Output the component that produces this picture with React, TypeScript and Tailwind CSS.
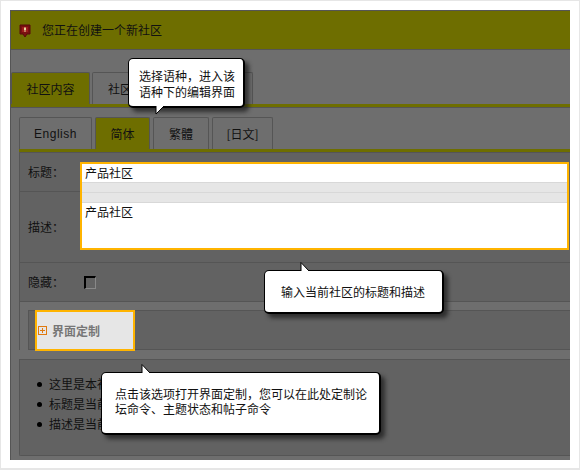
import React from "react"

const font = "font-['Noto_Sans_CJK_SC','Liberation_Sans',sans-serif]"

function Tab({ label, active, className }: { label: string; active?: boolean; className: string }) {
  return (
    <div
      className={
        "flex h-[32px] items-center justify-center rounded-t-[2px] border border-b-0 border-[#555] text-[12px] text-[#111] " +
        (active ? "bg-[#6e6e00] " : "bg-[#6e6e6e] ") +
        className
      }
    >
      {label}
    </div>
  )
}

// white speech bubble laid over the dimmed page
function Callout({ className, tailClass, up, children }: { className: string; tailClass: string; up?: boolean; children: React.ReactNode }) {
  return (
    <div className={"absolute z-10 rounded-[5px] border border-black border-b-2 border-r-2 bg-white text-[12px] text-[#111] shadow-[4px_4px_4px_rgba(30,30,30,0.75)] " + className}>
      {children}
      <svg className={"absolute " + tailClass} width="12" height="9" viewBox="0 0 12 9">
        {up ? (
          <path d="M1 9V0.5L9 9" fill="#fff" stroke="#000" strokeWidth="1" />
        ) : (
          <path d="M1 0L1 8L9 0" fill="#fff" stroke="#000" strokeWidth="1" />
        )}
      </svg>
    </div>
  )
}

export default function App() {
  return (
    <div className={"relative h-[470px] w-[580px] overflow-hidden border-t border-l border-r border-b-2 border-[#e6e6e6] bg-white " + font}>
      <div className="ml-[9px] mt-[9px] h-[450px] w-[560px] overflow-hidden border-l border-t border-[#555] bg-[#6e6e6e]">
        <div className="flex h-[39px] items-center border-b border-[#555] bg-[#6e6e00] pl-[8px] text-[12px] text-[#111]">
          <svg width="12" height="14" viewBox="0 0 12 14" className="mr-[11px] mt-[1px]">
            <path d="M1 1H11V10H8L6 13L4 10H1Z" fill="#7a1010" stroke="#5a0a0a" />
            <rect x="3" y="3" width="6" height="5" fill="#9c1c1c" />
            <rect x="5" y="3.5" width="2" height="2.5" fill="#e8d8a0" />
            <rect x="5" y="6.5" width="2" height="1" fill="#e8d8a0" />
          </svg>
          您正在创建一个新社区
        </div>

        <div className="mt-[22px] flex gap-[2px]">
          <Tab label="社区内容" active className="w-[79px]" />
          <div className="flex h-[32px] w-[161px] items-center rounded-t-[2px] border border-b-0 border-[#555] pl-[15px] text-[12px] text-[#111]">社区</div>
        </div>
        <div className="h-[3px] bg-[#6e6e00]" />

        <div className="border-t border-[#555] pl-[8px]">
          <div className="flex gap-[3px] pt-[9px]">
            <Tab label="English" className="w-[73px] font-['Liberation_Sans',sans-serif] tracking-[0.5px]" />
            <Tab label="简体" active className="w-[55px]" />
            <Tab label="繁體" className="w-[56px]" />
            <Tab label="[日文]" className="w-[61px]" />
          </div>
          <div className="h-[3px] bg-[#6e6e00]" />

          <div className="grid grid-cols-[60px_491px] grid-rows-[39px_71px_39px] border-l border-t border-[#555] bg-[#626262] text-[12px] text-[#111]">
            <div className="flex items-center border-b border-[#555] pl-[8px]">标题：</div>
            <div className="row-span-2 border-b border-[#555] pt-[9px]">
              <div className="h-[88px] w-[489px] border-2 border-[#ffb400] bg-[#e6e6e6]">
                <div className="h-[18px] bg-white pl-[3px] leading-[18px]">产品社区</div>
                <div className="h-[10px] border-t border-[#d8d8d8]" />
                <div className="h-[11px] border-y border-[#d8d8d8]" />
                <div className="h-[45px] bg-white pl-[3px] leading-[18px]">产品社区</div>
              </div>
            </div>
            <div className="flex items-center border-b border-[#555] pl-[8px]">描述：</div>
            <div className="flex items-center border-b border-[#555] pl-[8px]">隐藏：</div>
            <div className="flex items-center border-b border-[#555] pl-[4px]">
              <div className="h-[13px] w-[12px] border border-t-2 border-l-2 border-t-black border-l-black border-r-[#888] border-b-[#888] bg-[#626262]" />
            </div>
          </div>

          <div className="border-l border-[#555] pl-[8px] pt-[8px]">
            <div className="h-[40px] border border-r-0 border-[#555] bg-[#626262]">
              <div className="-mt-px ml-[6px] flex h-[41px] w-[100px] items-center border-2 border-[#ffb400] bg-[#e6e6e6] pl-[1px] text-[12px] font-bold text-[#777]">
                <svg width="9" height="9" viewBox="0 0 9 9" className="mr-[5px]">
                  <rect x="0.5" y="0.5" width="8" height="8" fill="none" stroke="#e07a10" />
                  <path d="M4.5 2V7M2 4.5H7" stroke="#e07a10" />
                </svg>
                界面定制
              </div>
            </div>
          </div>

          <div className="mt-[9px] h-[97px] rounded-bl-[2px] border border-r-0 border-[#555] bg-[#626262] pl-[17px] pt-[14px] text-[12px] leading-[20px] text-[#111]">
            {["这里是本社", "标题是当前", "描述是当前"].map((line) => (
              <div key={line} className="flex items-center">
                <span className="mr-[7px] h-[5px] w-[5px] rounded-full bg-black" />
                {line}
              </div>
            ))}
          </div>
        </div>
      </div>

      <Callout className="left-[127px] top-[57px] h-[50px] w-[117px] pl-[10px] pt-[9px] leading-[16px]" tailClass="left-[26px] top-[47px]">
        选择语种，进入该
        <br />
        语种下的编辑界面
      </Callout>
      <Callout className="left-[263px] top-[269px] h-[44px] w-[180px] pl-[16px] pt-[13px] leading-[16px]" tailClass="left-[35px] -top-[9px]" up>
        输入当前社区的标题和描述
      </Callout>
      <Callout className="left-[100px] top-[371px] h-[63px] w-[280px] pl-[13px] pt-[13px] leading-[15px]" tailClass="left-[39px] -top-[9px]" up>
        点击该选项打开界面定制，您可以在此处定制论
        <br />
        坛命令、主题状态和帖子命令
      </Callout>
    </div>
  )
}
